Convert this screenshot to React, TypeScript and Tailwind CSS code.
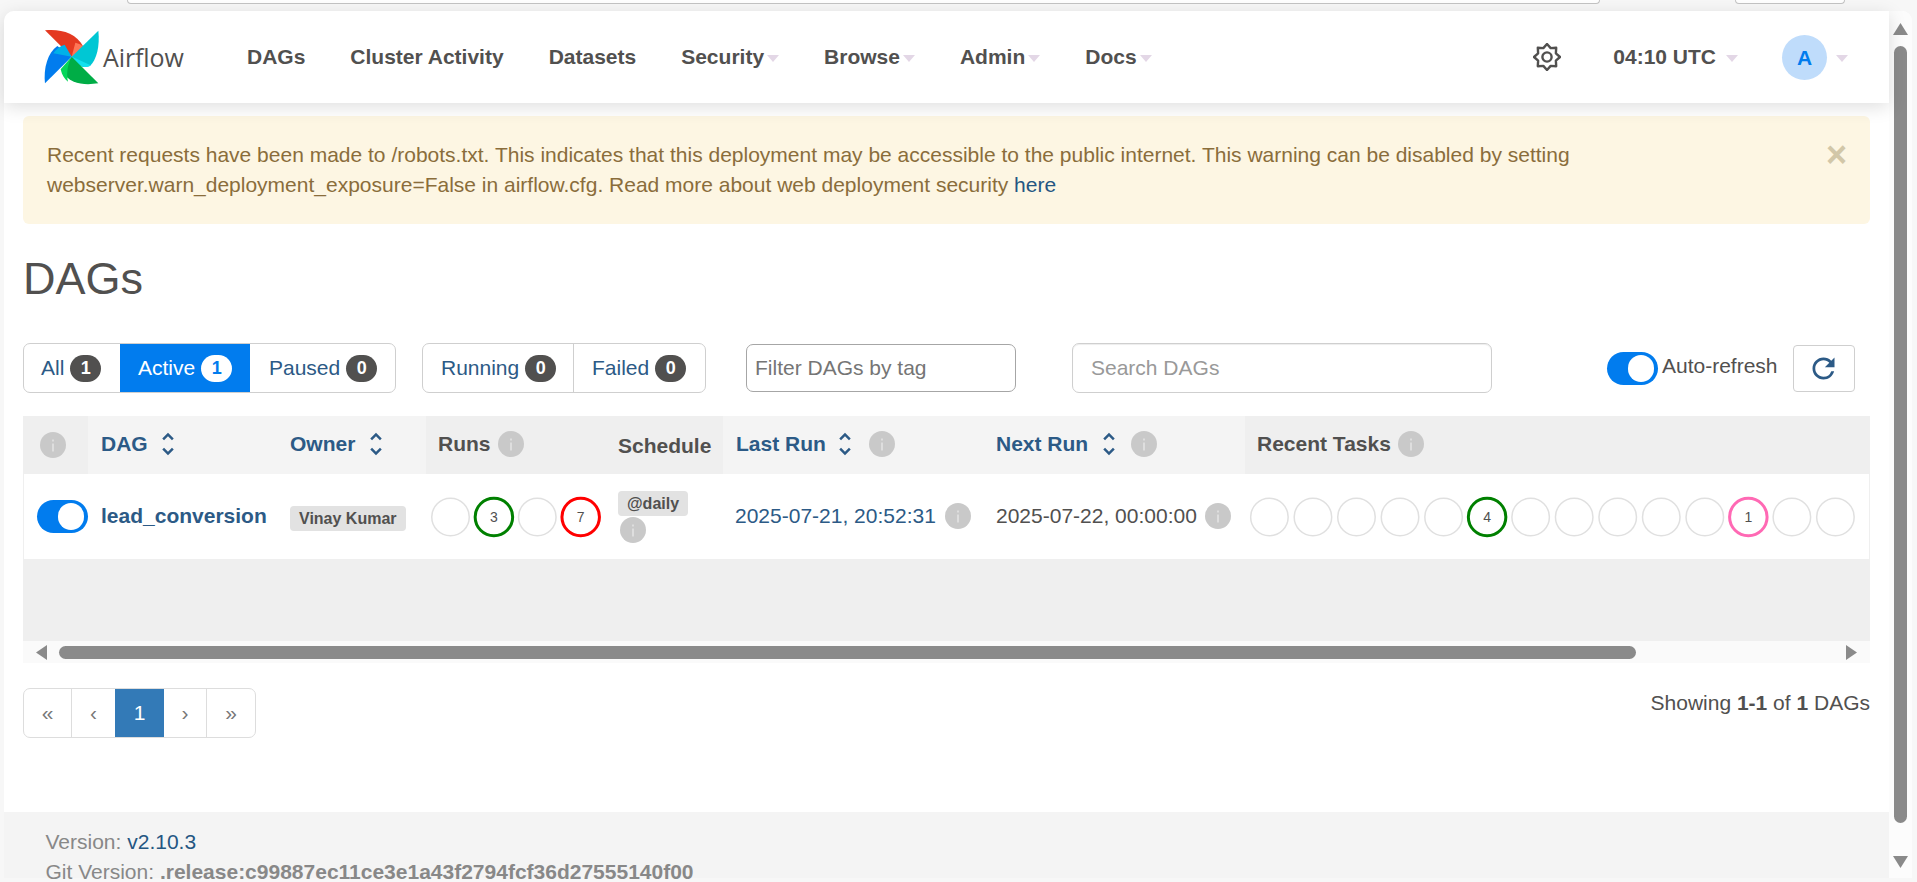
import React from "react";
import { MdUnfoldMore, MdRefresh } from "react-icons/md";

const Caret = () => (
  <span className="ml-[2px] mt-[3px] inline-block h-0 w-0 border-x-[6px] border-t-[7px] border-x-transparent border-t-[#e3d7e6]" />
);

const Info = () => (
  <svg width="26" height="26" viewBox="0 0 26 26" className="shrink-0">
    <circle cx="13" cy="13" r="13" fill="#c9c9c9" />
    <rect x="12" y="11.5" width="2" height="8" fill="#dedede" />
    <rect x="12" y="7.5" width="2" height="2" fill="#dedede" />
  </svg>
);

const Sort = () => <MdUnfoldMore size={30} className="mx-[3px] shrink-0 text-[#2c5a86]" />;

const Logo = () => (
  <svg width="64" height="62" viewBox="0 0 192 186" className="shrink-0">
    <path d="M95 92 L15 13 C60 8 108 20 130 62 Z" fill="#e43921" />
    <path d="M95 92 L106 50 C116 52 125 56 130 62 Z" fill="#ff7557" />
    <path d="M95 92 L175 14 C180 60 170 100 150 120 C130 128 112 122 95 92 Z" fill="#00c7d4" />
    <path d="M95 92 L106 97 L152 118 C140 126 118 128 95 92 Z" fill="#11e1ee" />
    <path d="M95 92 L175 172 C135 178 90 176 65 135 Z" fill="#00ad46" />
    <path d="M95 92 L62 130 C66 148 74 160 84 167 C78 140 84 112 95 92 Z" fill="#04d659" />
    <path d="M95 92 L15 172 C10 130 22 80 52 60 Z" fill="#017cee" />
    <path d="M95 92 L40 82 C48 70 60 60 74 56 Z" fill="#00b1e8" />
  </svg>
);

const Gear = () => {
  const pts = Array.from({ length: 16 }, (_, i) => {
    const a = (i * Math.PI) / 8 - Math.PI / 2;
    const r = i % 2 === 0 ? 13 : 9.6;
    return `${14 + r * Math.cos(a)},${14 + r * Math.sin(a)}`;
  }).join(" ");
  return (
    <svg width="28" height="28" viewBox="0 0 28 28" className="shrink-0">
      <polygon points={pts} fill="none" stroke="#51504f" strokeWidth="2.4" strokeLinejoin="round" />
      <circle cx="14" cy="14" r="4.6" fill="none" stroke="#51504f" strokeWidth="2.4" />
    </svg>
  );
};

const Toggle = () => (
  <span className="flex h-[33px] w-[51px] shrink-0 items-center justify-end rounded-full bg-[#017cee] pr-[4px]">
    <span className="block h-[27px] w-[26px] rounded-full bg-white" />
  </span>
);

const Badge = ({ n, active }: { n: number; active?: boolean }) => (
  <span
    className={
      active
        ? "ml-[6px] flex h-[27px] min-w-[31px] items-center justify-center rounded-[14px] bg-white text-[18px] font-bold text-[#017cee]"
        : "ml-[6px] flex h-[27px] min-w-[31px] items-center justify-center rounded-[14px] bg-[#51504f] text-[18px] font-bold text-white"
    }
  >
    {n}
  </span>
);

const Circles = ({
  items,
  width,
  start,
  pitch,
}: {
  items: { v?: number; c?: string }[];
  width: number;
  start: number;
  pitch: number;
}) => (
  <svg width={width} height="44" viewBox={`0 0 ${width} 44`} className="shrink-0">
    {items.map((it, i) => {
      const cx = start + i * pitch;
      return (
        <g key={i}>
          <circle
            cx={cx}
            cy="22"
            r="18.75"
            fill="#fff"
            stroke={it.c ?? "#e0e0e0"}
            strokeWidth={it.c ? 3 : 1.5}
          />
          {it.v !== undefined && (
            <text x={cx} y="27" textAnchor="middle" fontSize="14" fill="#51504f">
              {it.v}
            </text>
          )}
        </g>
      );
    })}
  </svg>
);

const navItems: [string, boolean][] = [
  ["DAGs", false],
  ["Cluster Activity", false],
  ["Datasets", false],
  ["Security", true],
  ["Browse", true],
  ["Admin", true],
  ["Docs", true],
];

const recent = Array.from({ length: 14 }, (_, i) =>
  i === 5 ? { v: 4, c: "#008000" } : i === 11 ? { v: 1, c: "#ff69b4" } : {}
);

export default function App() {
  return (
    <div className="flex h-[882px] w-[1917px] flex-col overflow-hidden bg-[#f7f7f7] font-['Liberation_Sans',Arial,sans-serif] text-[21px] leading-[30px] text-[#51504f]">
      {/* strip above the page */}
      <div className="flex h-[11px] shrink-0 items-start pl-[127px]">
        <div className="h-[4px] w-[1473px] rounded-b-[12px] border-x border-b border-[#c4c4c4] bg-white" />
        <div className="ml-[135px] h-[4px] w-[110px] rounded-b-[12px] border-x border-b border-[#c4c4c4] bg-white" />
      </div>

      {/* browser card */}
      <div className="ml-[4px] flex h-[867px] w-[1908px] shrink-0 rounded-t-[10px] bg-white">
        <div className="flex w-[1885px] shrink-0 flex-col">
          {/* navbar */}
          <nav className="relative z-10 flex h-[92px] shrink-0 items-center rounded-tl-[10px] bg-white pl-[36px] pr-[41px] shadow-[0_4px_18px_rgba(0,0,0,0.13)]">
            <div className="flex w-[184.5px] shrink-0 items-center">
              <Logo />
              <span className="-ml-px font-['Open_Sans',sans-serif] text-[25px] font-normal tracking-[-0.1px] text-[#51504f]">Airflow</span>
            </div>
            {navItems.map(([label, caret]) => (
              <span key={label} className="flex items-center px-[22.5px] font-bold">
                {label}
                {caret && (
                  <span className="ml-[1px] flex">
                    <Caret />
                  </span>
                )}
              </span>
            ))}
            <div className="ml-auto flex items-center">
              <Gear />
              <span className="ml-[52px] font-bold">04:10 UTC</span>
              <span className="ml-[8px] flex">
                <Caret />
              </span>
              <span className="ml-[44px] flex h-[45px] w-[45px] items-center justify-center rounded-full bg-[#bfdcfb] pt-[2px] font-bold text-[#017cee]">
                A
              </span>
              <span className="ml-[7px] flex">
                <Caret />
              </span>
            </div>
          </nav>

          {/* content */}
          <main className="flex min-h-0 flex-1 flex-col px-[19px] pt-[13px]">
            <div className="flex h-[108px] shrink-0 justify-between rounded-[6px] bg-[#fdf6e3] pb-[20px] pl-[24px] pr-[23px] pt-[24px] text-[#8a6d3b]">
              <p className="w-[1560px]">
                Recent requests have been made to /robots.txt. This indicates that this deployment may be accessible to the public internet. This warning can be disabled by setting webserver.warn_deployment_exposure=False in airflow.cfg. Read more about web deployment security{" "}
                <a className="text-[#245682]">here</a>
              </p>
              <span className="mt-[6px] text-[36px] font-bold leading-[18px] text-[#d2c7a8]">×</span>
            </div>

            <h1 className="mt-[30px] h-[50px] shrink-0 text-[45px] font-normal leading-[50px]">DAGs</h1>

            {/* toolbar */}
            <div className="mt-[39px] flex h-[50px] shrink-0 items-center text-[#2c5a86]">
              <div className="flex h-[50px] w-[373px] overflow-hidden rounded-[7px] border border-[#cfcfcf]">
                <span className="flex w-[96px] items-center pl-[17px]">All<Badge n={1} /></span>
                <span className="flex w-[130px] items-center bg-[#017cee] pl-[18px] text-white">Active<Badge n={1} active /></span>
                <span className="flex flex-1 items-center pl-[19px]">Paused<Badge n={0} /></span>
              </div>
              <div className="ml-[26px] flex h-[50px] w-[284px] overflow-hidden rounded-[7px] border border-[#cfcfcf]">
                <span className="flex w-[151px] items-center border-r border-[#cfcfcf] pl-[18px]">Running<Badge n={0} /></span>
                <span className="flex flex-1 items-center pl-[18px]">Failed<Badge n={0} /></span>
              </div>
              <input
                readOnly
                placeholder="Filter DAGs by tag"
                className="ml-[40px] h-[48px] w-[270px] rounded-[7px] border border-[#a6a6a6] pl-[8px] text-[21px] placeholder:text-[#757575]"
              />
              <input
                readOnly
                placeholder="Search DAGs"
                className="ml-[56px] h-[50px] w-[420px] rounded-[7px] border border-[#cfcfcf] pl-[18px] text-[21px] shadow-[inset_0_1px_1px_rgba(0,0,0,0.075)] placeholder:text-[#999999]"
              />
              <span className="ml-[115px]">
                <Toggle />
              </span>
              <span className="mb-[4px] ml-[4px] text-[#51504f]">Auto-refresh</span>
              <span className="ml-[15px] flex h-[47px] w-[62px] items-center justify-center rounded-[4px] border border-[#cfcfcf]">
                <MdRefresh size={33} className="text-[#2c5a86]" />
              </span>
            </div>

            {/* table */}
            <div className="mt-[23px] shrink-0">
              <div className="flex h-[58px] items-center font-bold">
                <div className="flex h-full w-[65px] items-center bg-[#efefef] pl-[17px]"><Info /></div>
                <div className="flex h-full w-[190px] items-center bg-[#f4f4f4] pb-[2px] pl-[13px] text-[#2c5a86]">DAG<span className="ml-[2px] flex"><Sort /></span></div>
                <div className="flex h-full w-[148px] items-center bg-[#f4f4f4] pb-[2px] pl-[12px] text-[#2c5a86]">Owner<span className="ml-[3px] flex"><Sort /></span></div>
                <div className="flex h-full w-[180px] items-center gap-[7px] bg-[#efefef] pb-[2px] pl-[12px]">Runs<Info /></div>
                <div className="flex h-full w-[117px] items-center bg-[#efefef] pl-[12px] pt-[2px]">Schedule</div>
                <div className="flex h-full w-[261px] items-center bg-[#f4f4f4] pb-[2px] pl-[13px] text-[#2c5a86]">Last Run<span className="ml-[1px] flex"><Sort /></span><span className="ml-[6px] flex"><Info /></span></div>
                <div className="flex h-full w-[261px] items-center bg-[#f4f4f4] pb-[2px] pl-[12px] text-[#2c5a86]">Next Run<span className="ml-[3px] flex"><Sort /></span><span className="ml-[4px] flex"><Info /></span></div>
                <div className="flex h-full flex-1 items-center gap-[7px] bg-[#efefef] pb-[2px] pl-[12px]">Recent Tasks<Info /></div>
              </div>

              <div className="flex h-[85px] items-center border-x border-[#efefef] bg-white">
                <div className="w-[64px] pl-[13px]"><Toggle /></div>
                <div className="w-[190px] pb-[2px] pl-[13px] font-bold text-[#2c5a86]">lead_conversion</div>
                <div className="w-[148px] pl-[12px]">
                  <span className="inline-block h-[25px] rounded-[4px] bg-[#e2e2e2] px-[9px] text-[16px] font-bold leading-[25px]">Vinay Kumar</span>
                </div>
                <div className="w-[180px] pl-[5px]">
                  <Circles width={172} start={19.5} pitch={43.4} items={[{}, { v: 3, c: "#008000" }, {}, { v: 7, c: "#ff0000" }]} />
                </div>
                <div className="flex w-[117px] flex-col items-start gap-[1px] pl-[12px] pt-[1px]">
                  <span className="h-[25px] rounded-[4px] bg-[#e2e2e2] px-[9px] text-[16px] font-bold leading-[25px]">@daily</span>
                  <span className="ml-[2px] flex"><Info /></span>
                </div>
                <div className="flex w-[261px] items-center gap-[9px] pb-[2px] pl-[12px] text-[#2c5a86]">2025-07-21, 20:52:31<Info /></div>
                <div className="flex w-[261px] items-center gap-[8px] pb-[2px] pl-[12px]">2025-07-22, 00:00:00<Info /></div>
                <div className="flex-1 pl-[2px]">
                  <Circles width={610} start={22.4} pitch={43.54} items={recent} />
                </div>
              </div>

              <div className="h-[82px] bg-[#efefef]" />

              <div className="flex h-[22px] items-center bg-[#fafafa] pl-[13px] pr-[13px]">
                <svg width="11" height="15" viewBox="0 0 11 15"><path d="M11 0 V15 L0 7.5 Z" fill="#8a8a8a" /></svg>
                <span className="ml-[12px] block h-[13px] w-[1577px] rounded-full bg-[#8a8a8a]" />
                <svg width="11" height="15" viewBox="0 0 11 15" className="ml-auto"><path d="M0 0 V15 L11 7.5 Z" fill="#8a8a8a" /></svg>
              </div>
            </div>

            {/* pagination */}
            <div className="mt-[25px] flex shrink-0 items-start justify-between">
              <div className="flex h-[50px] overflow-hidden rounded-[7px] border border-[#dddddd] text-[#777777]">
                <span className="flex w-[48px] items-center justify-center border-r border-[#dddddd]">«</span>
                <span className="flex w-[43px] items-center justify-center">‹</span>
                <span className="flex w-[49px] items-center justify-center bg-[#337ab7] text-white">1</span>
                <span className="flex w-[43px] items-center justify-center border-r border-[#dddddd]">›</span>
                <span className="flex w-[48px] items-center justify-center">»</span>
              </div>
              <span>Showing <b>1-1</b> of <b>1</b> DAGs</span>
            </div>
          </main>

          {/* footer */}
          <footer className="h-[66px] shrink-0 bg-[#f4f4f4] pl-[41.5px] pt-[15px] text-[#888888]">
            <div>Version: <a className="text-[#245682]">v2.10.3</a></div>
            <div className="mt-[5px] leading-[20px]">Git Version: <b>.release:c99887ec11ce3e1a43f2794fcf36d27555140f00</b></div>
          </footer>
        </div>

        {/* page scrollbar */}
        <div className="flex w-[23px] shrink-0 flex-col items-center rounded-tr-[10px] bg-[#fcfcfc] pt-[12px]">
          <svg width="15" height="12" viewBox="0 0 15 12"><path d="M0 12 L7.5 0 L15 12 Z" fill="#8a8a8a" /></svg>
          <span className="mt-[11px] block h-[777px] w-[13px] rounded-full bg-[#8a8a8a]" />
          <svg width="15" height="12" viewBox="0 0 15 12" className="mt-[33px]"><path d="M0 0 L15 0 L7.5 12 Z" fill="#8a8a8a" /></svg>
        </div>
      </div>
    </div>
  );
}
